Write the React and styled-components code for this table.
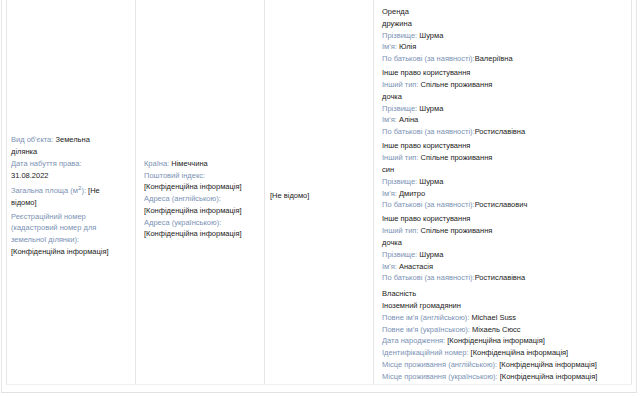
import React from "react"
import styled, { createGlobalStyle } from "styled-components"

const GlobalStyle = createGlobalStyle`
  body {
    margin: 0;
    background: #fff;
    font-family: "Liberation Sans", Arial, sans-serif;
    font-size: 7.5px;
    line-height: 11.8px;
    color: #222;
  }
`

const color = {
  label: "#7b92b4",
  text: "#222",
  line: "#e7e7e7",
}

export const Frame = styled.div`
  width: 636px;
  margin-left: 1px;
  height: 393px;
  border-left: 1px solid ${color.line};
  border-right: 1px solid ${color.line};
  border-bottom: 1px solid #e2e2e2;
  padding: 0 4px;
  box-sizing: border-box;
`

export const Row = styled.div`
  display: grid;
  grid-template-columns: 128px 129px 109px 261px;
  height: 385px;
  border-left: 1px solid ${color.line};
  border-right: 1px solid ${color.line};
  border-bottom: 1px solid #f0f0f0;
  box-sizing: border-box;
`

export const Cell = styled.div`
  display: flex;
  flex-direction: column;
  justify-content: ${({ $top }) => ($top ? "flex-start" : "center")};
  padding: ${({ $pt }) => $pt || 0}px ${({ $pr }) => $pr || 4}px 0 ${({ $pl }) => $pl}px;
  border-left: ${({ $first }) => ($first ? "none" : `1px solid ${color.line}`)};
  box-sizing: border-box;
`

export const Field = styled.div`
  margin-top: ${({ $gap }) => $gap || 0}px;
`

export const Label = styled.span`
  color: ${color.label};
`

export const Value = styled.span`
  color: ${color.text};
`

export const Group = styled.div`
  margin-top: ${({ $gap }) => $gap}px;

  &:first-child {
    margin-top: 0;
  }
`

const secret = "[Конфіденційна інформація]"

const groups = [
  {
    gap: 0,
    lines: [
      ["", "Оренда"],
      ["", "дружина"],
      ["Прізвище: ", "Шурма"],
      ["Ім'я: ", "Юлія"],
      ["По батькові (за наявності):", "Валеріївна"],
    ],
  },
  {
    gap: 2.3,
    lines: [
      ["", "Інше право користування"],
      ["Інший тип: ", "Спільне проживання"],
      ["", "дочка"],
      ["Прізвище: ", "Шурма"],
      ["Ім'я: ", "Аліна"],
      ["По батькові (за наявності):", "Ростиславівна"],
    ],
  },
  {
    gap: 2.3,
    lines: [
      ["", "Інше право користування"],
      ["Інший тип: ", "Спільне проживання"],
      ["", "син"],
      ["Прізвище: ", "Шурма"],
      ["Ім'я: ", "Дмитро"],
      ["По батькові (за наявності):", "Ростиславович"],
    ],
  },
  {
    gap: 2.3,
    lines: [
      ["", "Інше право користування"],
      ["Інший тип: ", "Спільне проживання"],
      ["", "дочка"],
      ["Прізвище: ", "Шурма"],
      ["Ім'я: ", "Анастасія"],
      ["По батькові (за наявності):", "Ростиславівна"],
    ],
  },
  {
    gap: 4,
    lines: [
      ["", "Власність"],
      ["", "Іноземний громадянин"],
      ["Повне ім'я (англійською): ", "Michael Suss"],
      ["Повне ім'я (українською): ", "Міхаель Сюсс"],
      ["Дата народження: ", secret],
      ["Ідентифікаційний номер: ", secret],
      ["Місце проживання (англійською): ", secret],
      ["Місце проживання (українською): ", secret],
    ],
  },
]

const App = () => {
  return (
    <>
      <GlobalStyle />
      <Frame>
        <Row>
          <Cell $first $pl={4} $pr={24} $pt={8}>
            <Field>
              <Label>Вид об'єкта: </Label>
              <Value>Земельна ділянка</Value>
            </Field>
            <Field>
              <Label>Дата набуття права: </Label>
              <Value>31.08.2022</Value>
            </Field>
            <Field>
              <Label>
                Загальна площа (м<sup>2</sup>):{" "}
              </Label>
              <Value>[Не відомо]</Value>
            </Field>
            <Field $gap={2}>
              <Label>Реєстраційний номер (кадастровий номер для земельної ділянки):</Label>
              <div>
                <Value>{secret}</Value>
              </div>
            </Field>
          </Cell>
          <Cell $pl={8} $pt={14}>
            <Field>
              <Label>Країна: </Label>
              <Value>Німеччина</Value>
            </Field>
            <Field>
              <Label>Поштовий індекс: </Label>
              <Value>{secret}</Value>
            </Field>
            <Field>
              <Label>Адреса (англійською): </Label>
              <Value>{secret}</Value>
            </Field>
            <Field>
              <Label>Адреса (українською): </Label>
              <Value>{secret}</Value>
            </Field>
          </Cell>
          <Cell $pl={5} $pt={8}>
            <Value>[Не відомо]</Value>
          </Cell>
          <Cell $top $pl={8} $pt={6}>
            {groups.map((group, i) => (
              <Group key={i} $gap={group.gap}>
                {group.lines.map(([label, value], j) => (
                  <div key={j}>
                    {label && <Label>{label}</Label>}
                    <Value>{value}</Value>
                  </div>
                ))}
              </Group>
            ))}
          </Cell>
        </Row>
      </Frame>
    </>
  )
}

export default App
